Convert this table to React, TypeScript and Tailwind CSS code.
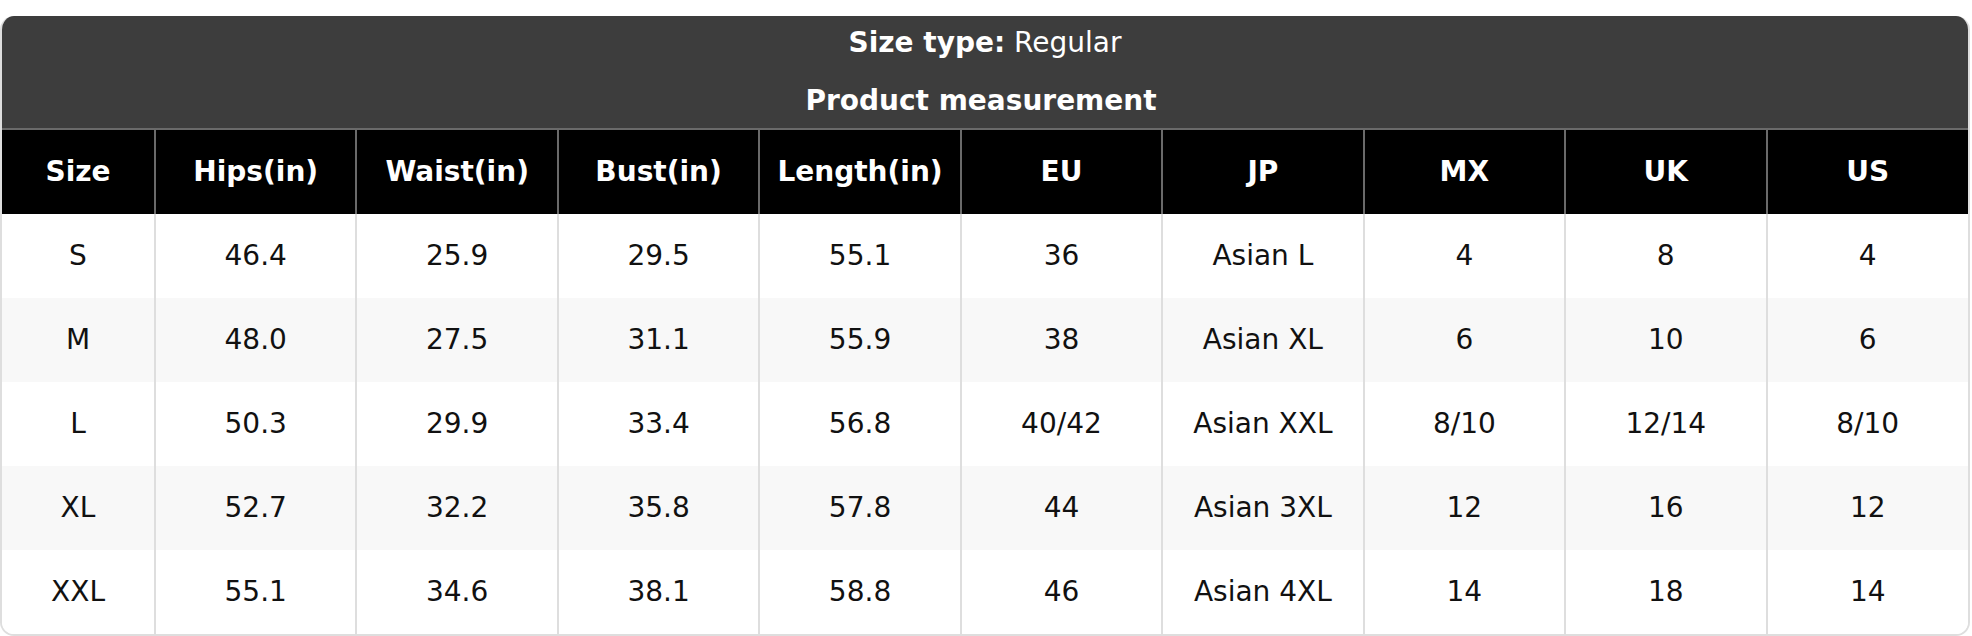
const headers = ["Size", "Hips(in)", "Waist(in)", "Bust(in)", "Length(in)", "EU", "JP", "MX", "UK", "US"]

const rows = [
  ["S", "46.4", "25.9", "29.5", "55.1", "36", "Asian L", "4", "8", "4"],
  ["M", "48.0", "27.5", "31.1", "55.9", "38", "Asian XL", "6", "10", "6"],
  ["L", "50.3", "29.9", "33.4", "56.8", "40/42", "Asian XXL", "8/10", "12/14", "8/10"],
  ["XL", "52.7", "32.2", "35.8", "57.8", "44", "Asian 3XL", "12", "16", "12"],
  ["XXL", "55.1", "34.6", "38.1", "58.8", "46", "Asian 4XL", "14", "18", "14"],
]

export default function App() {
  return (
    <div className="min-h-screen bg-white pt-4 font-['DejaVu_Sans',sans-serif] text-[28px]">
      <div className="w-[1970px] overflow-hidden rounded-[14px] border-x-2 border-b-2 border-[#dedede]">
        <div className="bg-[#3d3d3d] text-white">
          <div className="flex h-[57px] items-center justify-center pb-1">
            <span className="font-bold">Size type:</span>
            <span>&nbsp;Regular</span>
          </div>
          <div className="flex h-[55px] items-center justify-center pr-2 font-bold">Product measurement</div>
        </div>
        <table className="w-full table-fixed border-collapse">
          <colgroup>
            <col className="w-[153px]" />
            {headers.slice(1).map((h) => (
              <col key={h} />
            ))}
          </colgroup>
          <thead>
            <tr className="h-[85px] bg-black text-white">
              {headers.map((h, i) => (
                <th
                  key={h}
                  className={`border-t-2 border-[#6a6a6a] font-bold ${i !== 0 ? "border-l-2" : ""}`}
                >
                  {h}
                </th>
              ))}
            </tr>
          </thead>
          <tbody>
            {rows.map((row, ri) => (
              <tr key={row[0]} className={`h-[84px] ${ri % 2 === 1 ? "bg-[#f8f8f8]" : "bg-white"}`}>
                {row.map((cell, ci) => (
                  <td
                    key={ci}
                    className={`border-[#dedede] text-center text-[#111] ${ci !== 0 ? "border-l-2" : ""}`}
                  >
                    {cell}
                  </td>
                ))}
              </tr>
            ))}
          </tbody>
        </table>
      </div>
    </div>
  )
}
